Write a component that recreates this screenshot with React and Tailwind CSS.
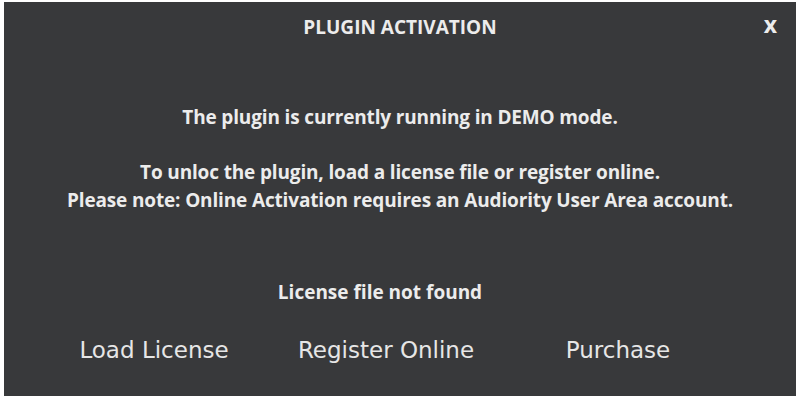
export default function App() {
  return (
    <div className="w-[799px] h-[400px] bg-white pl-[4px] pt-[2px] pr-[3px] pb-[4px]">
      <div
        className="relative flex flex-col h-full bg-[#38393b] text-[#ececec]"
        style={{ fontFamily: "'Open Sans', Lato, sans-serif" }}
      >
        <div className="flex items-center justify-center h-[50px]">
          <h1 className="text-[19px] font-bold">PLUGIN ACTIVATION</h1>
          <button className="absolute right-[19px] top-[7px] text-[23px] leading-[30px] font-bold">x</button>
        </div>

        <div className="flex flex-col items-center text-[19px] font-bold leading-[28px] tracking-[-0.15px]">
          <p className="mt-[51px]">The plugin is currently running in DEMO mode.</p>
          <p className="mt-[27px]">To unloc the plugin, load a license file or register online.</p>
          <p>Please note: Online Activation requires an Audiority User Area account.</p>
        </div>

        <p className="mt-[64px] text-[19px] font-bold text-center pr-[40px] leading-[28px]">
          License file not found
        </p>

        <div
          className="mt-[29px] ml-[34px] grid grid-cols-[232px_232px_232px] text-[23px] leading-[30px] text-[#e6e6e6]"
          style={{ fontFamily: "'DejaVu Sans', sans-serif" }}
        >
          <button className="text-center">Load License</button>
          <button className="text-center">Register Online</button>
          <button className="text-center">Purchase</button>
        </div>
      </div>
    </div>
  );
}
